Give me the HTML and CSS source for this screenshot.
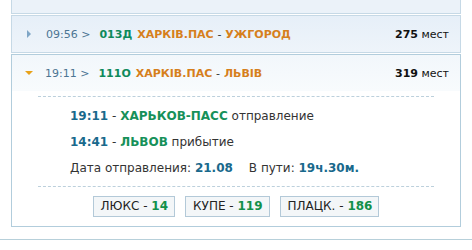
FILE: index.html
```html
<!DOCTYPE html>
<html lang="ru">
<head>
    <meta charset="UTF-8">
    <title>Поезда</title>
    <link rel="stylesheet" href="styles.css">
</head>
<body>
    <div class="list">
        <div class="item prev"></div>

        <div class="item">
            <div class="head">
                <span class="arrow right"></span>
                <span class="time">09:56 &gt;</span>
                <span class="num">013Д</span>
                <span class="route">ХАРКІВ.ПАС <span class="dash">-</span> УЖГОРОД</span>
                <span class="seats"><b>275</b> мест</span>
            </div>
        </div>

        <div class="item open">
            <div class="head">
                <span class="arrow down"></span>
                <span class="time">19:11 &gt;</span>
                <span class="num">111О</span>
                <span class="route">ХАРКІВ.ПАС <span class="dash">-</span> ЛЬВІВ</span>
                <span class="seats"><b>319</b> мест</span>
            </div>
            <div class="body">
                <div class="info">
                    <p><b class="t">19:11</b> - <b class="st">ХАРЬКОВ-ПАСС</b> отправление</p>
                    <p><b class="t">14:41</b> - <b class="st">ЛЬВОВ</b> прибытие</p>
                    <p>Дата отправления: <b class="t">21.08</b><span class="gap"></span>В пути: <b class="t">19ч.30м.</b></p>
                </div>
                <div class="cars">
                    <span class="car">ЛЮКС - <b>14</b></span>
                    <span class="car">КУПЕ - <b>119</b></span>
                    <span class="car">ПЛАЦК. - <b>186</b></span>
                </div>
            </div>
        </div>
    </div>
    <div class="rule"></div>
</body>
</html>
```

FILE: styles.css
```css
body {
    margin: 0;
    background: #fff;
    font-family: "DejaVu Sans", Verdana, sans-serif;
    font-size: 11px;
    color: #222;
}
.list {
    width: 450px;
    margin-left: 11px;
}
.item {
    border: 1px solid #c6d9e6;
    margin-bottom: 1px;
}
.item.prev {
    height: 13px;
    border-top: none;
    background: #ebf2f9;
}
.head {
    display: flex;
    align-items: center;
    height: 36px;
    padding: 0 11px 0 14px;
    background: linear-gradient(#e6eff8, #eef4fa);
    white-space: nowrap;
}
.item.open {
    border-color: #b2cddc;
}
.item.open .head {
    background: linear-gradient(#f2f7fb, #f8fbfd);
}
.arrow {
    width: 0;
    height: 0;
    margin-right: 14px;
}
.arrow.right {
    border-top: 4px solid transparent;
    border-bottom: 4px solid transparent;
    border-left: 4px solid #7fa6c6;
    margin-left: 1px;
    margin-right: 15px;
}
.arrow.down {
    border-left: 4px solid transparent;
    border-right: 4px solid transparent;
    border-top: 4px solid #e8a21a;
    margin-left: -1px;
    margin-right: 12px;
}
.time {
    color: #4c7593;
    margin-right: 9px;
}
.num {
    color: #0e8a5c;
    font-weight: bold;
    margin-right: 5px;
}
.route {
    color: #d67f1c;
    font-weight: bold;
}
.route .dash {
    color: #333;
    font-weight: normal;
}
.seats {
    margin-left: auto;
    color: #111;
}
.body {
    background: #fff;
    padding: 5px 26px 9px;
}
.info {
    border-top: 1px dashed #bcd0dc;
    border-bottom: 1px dashed #bcd0dc;
    padding: 6px 0 5px 32px;
    font-size: 12px;
    color: #333;
}
.info p {
    margin: 0;
    line-height: 26px;
}
.info .t {
    color: #19698c;
}
.info .st {
    color: #16915a;
}
.gap {
    display: inline-block;
    width: 16px;
}
.cars {
    display: flex;
    justify-content: center;
    gap: 10px;
    margin-top: 9px;
}
.car {
    display: inline-block;
    padding: 3px 6px 3px 7px;
    line-height: 13px;
    border: 1px solid #b3c9d8;
    background: #f3f6f8;
    font-size: 12px;
    color: #222;
}
.car b {
    color: #12904a;
}
.rule {
    margin-top: 12px;
    border-top: 1px solid #b7d0da;
}
```
